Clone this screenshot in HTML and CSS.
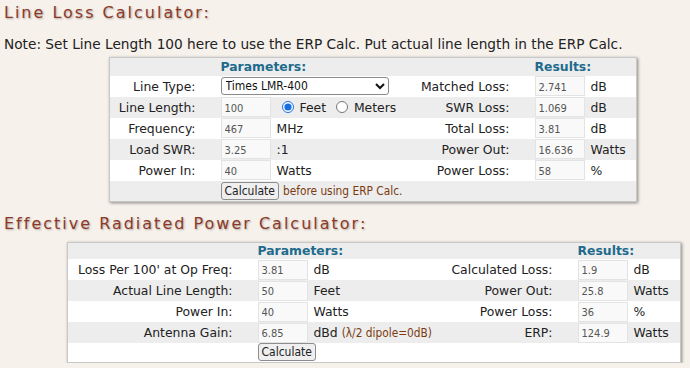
FILE: index.html
```html
<!DOCTYPE html>
<html lang="en">
<head>
    <meta charset="UTF-8">
    <title>Line Loss / ERP Calculator</title>
    <link rel="stylesheet" href="styles.css">
</head>
<body>
    <h2 class="title">Line Loss Calculator:</h2>
    <p class="note">Note: Set Line Length 100 here to use the ERP Calc. Put actual line length in the ERP Calc.</p>

    <table class="calc calc-loss">
        <colgroup>
            <col style="width:109px"><col style="width:54px"><col style="width:147px">
            <col style="width:113px"><col style="width:54px"><col style="width:50px">
        </colgroup>
        <tr class="head">
            <td></td>
            <td colspan="2">Parameters:</td>
            <td></td>
            <td colspan="2">Results:</td>
        </tr>
        <tr>
            <td class="label">Line Type:</td>
            <td colspan="2">
                <select class="cable">
                    <option>Times LMR-400</option>
                </select>
            </td>
            <td class="label">Matched Loss:</td>
            <td><input class="num" type="text" value="2.741" readonly></td>
            <td class="unit">dB</td>
        </tr>
        <tr>
            <td class="label">Line Length:</td>
            <td><input class="num" type="text" value="100"></td>
            <td class="unit">
                <label class="radio"><input type="radio" name="len" checked> Feet</label>
                <label class="radio"><input type="radio" name="len"> Meters</label>
            </td>
            <td class="label">SWR Loss:</td>
            <td><input class="num" type="text" value="1.069" readonly></td>
            <td class="unit">dB</td>
        </tr>
        <tr>
            <td class="label">Frequency:</td>
            <td><input class="num" type="text" value="467"></td>
            <td class="unit">MHz</td>
            <td class="label">Total Loss:</td>
            <td><input class="num" type="text" value="3.81" readonly></td>
            <td class="unit">dB</td>
        </tr>
        <tr>
            <td class="label">Load SWR:</td>
            <td><input class="num" type="text" value="3.25"></td>
            <td class="unit">:1</td>
            <td class="label">Power Out:</td>
            <td><input class="num" type="text" value="16.636" readonly></td>
            <td class="unit">Watts</td>
        </tr>
        <tr>
            <td class="label">Power In:</td>
            <td><input class="num" type="text" value="40"></td>
            <td class="unit">Watts</td>
            <td class="label">Power Loss:</td>
            <td><input class="num" type="text" value="58" readonly></td>
            <td class="unit">%</td>
        </tr>
        <tr class="foot">
            <td></td>
            <td colspan="5"><button class="btn" type="button">Calculate</button> <span class="hint">before using ERP Calc.</span></td>
        </tr>
    </table>

    <h2 class="title">Effective Radiated Power Calculator:</h2>

    <table class="calc calc-erp">
        <colgroup>
            <col style="width:188px"><col style="width:54px"><col style="width:130px">
            <col style="width:136px"><col style="width:54px"><col style="width:51px">
        </colgroup>
        <tr class="head">
            <td></td>
            <td colspan="2">Parameters:</td>
            <td></td>
            <td colspan="2">Results:</td>
        </tr>
        <tr>
            <td class="label">Loss Per 100' at Op Freq:</td>
            <td><input class="num" type="text" value="3.81"></td>
            <td class="unit">dB</td>
            <td class="label">Calculated Loss:</td>
            <td><input class="num" type="text" value="1.9" readonly></td>
            <td class="unit">dB</td>
        </tr>
        <tr>
            <td class="label">Actual Line Length:</td>
            <td><input class="num" type="text" value="50"></td>
            <td class="unit">Feet</td>
            <td class="label">Power Out:</td>
            <td><input class="num" type="text" value="25.8" readonly></td>
            <td class="unit">Watts</td>
        </tr>
        <tr>
            <td class="label">Power In:</td>
            <td><input class="num" type="text" value="40"></td>
            <td class="unit">Watts</td>
            <td class="label">Power Loss:</td>
            <td><input class="num" type="text" value="36" readonly></td>
            <td class="unit">%</td>
        </tr>
        <tr>
            <td class="label">Antenna Gain:</td>
            <td><input class="num" type="text" value="6.85"></td>
            <td class="unit">dBd <span class="hint">(λ/2 dipole=0dB)</span></td>
            <td class="label">ERP:</td>
            <td><input class="num" type="text" value="124.9" readonly></td>
            <td class="unit">Watts</td>
        </tr>
        <tr class="foot">
            <td></td>
            <td colspan="5"><button class="btn" type="button">Calculate</button></td>
        </tr>
    </table>
</body>
</html>
```

FILE: styles.css
```css
* {
    box-sizing: border-box;
}

html, body {
    margin: 0;
    overflow: hidden;
}

body {
    font-family: 'DejaVu Sans', sans-serif;
    font-size: 12.4px;
    color: #222;
    background: #f7f1ec;
    padding: 0 4px;
}

.title {
    font-family: 'DejaVu Sans', sans-serif;
    font-weight: normal;
    font-size: 16px;
    letter-spacing: 2px;
    line-height: 26px;
    color: #8c3a28;
    text-shadow: 1px 1px 2px rgba(0, 0, 0, 0.3);
    margin: 0;
}

.note {
    font-size: 13.7px;
    line-height: 20px;
    margin: 8px 0 3px;
}

.calc {
    border-collapse: collapse;
    table-layout: fixed;
    background: #fff;
    border: 1px solid #c8c8c8;
    box-shadow: 1px 1px 3px rgba(0, 0, 0, 0.45);
}

.calc-loss {
    margin: 0 0 9px 105px;
}

.calc-erp {
    margin: 5px 0 0 63px;
}

.calc td {
    padding: 0;
    height: 21px;
    white-space: nowrap;
}

.calc tr:nth-child(odd) {
    background: #ededed;
}

.calc tr.head td {
    height: 18px;
    font-weight: bold;
    color: #1d6a8c;
    padding-left: 2px;
    line-height: 16px;
}

.calc-erp tr.head td {
    height: 16px;
}

.calc td.label {
    text-align: right;
    padding-right: 23px;
}

.calc td.unit {
    padding-left: 4px;
}

.num {
    display: block;
    width: 50px;
    height: 20px;
    margin-left: 2px;
    padding: 2px 3px 0;
    font-family: 'DejaVu Sans Condensed', 'DejaVu Sans', sans-serif;
    font-size: 11px;
    color: #555;
    background: #f9f9f9;
    border: 1px solid #e3e3e3;
    border-radius: 0;
    outline: none;
}

.cable {
    display: block;
    width: 168px;
    height: 18px;
    margin-left: 2px;
    font-family: 'DejaVu Sans Condensed', 'DejaVu Sans', sans-serif;
    font-size: 12px;
    color: #111;
    background: #fff;
    border: 1px solid #8a8a8a;
    border-radius: 3px;
}

.radio {
    margin-right: 1px;
}

.radio input {
    margin: 0 2px 0 5px;
    width: 12px;
    height: 12px;
    vertical-align: -1px;
    accent-color: #1a6fe0;
}

.calc tr.foot td {
    height: 21px;
    padding-left: 2px;
}

.calc-erp tr.foot td {
    height: 19px;
}

.btn {
    font-family: 'DejaVu Sans Condensed', 'DejaVu Sans', sans-serif;
    font-size: 12px;
    color: #222;
    height: 18px;
    padding: 0 3px;
    background: #efefef;
    border: 1px solid #8d8d8d;
    border-radius: 3px;
    vertical-align: middle;
}

.hint {
    font-family: 'DejaVu Sans Condensed', 'DejaVu Sans', sans-serif;
    font-size: 11.8px;
    color: #7a3b10;
}
```
